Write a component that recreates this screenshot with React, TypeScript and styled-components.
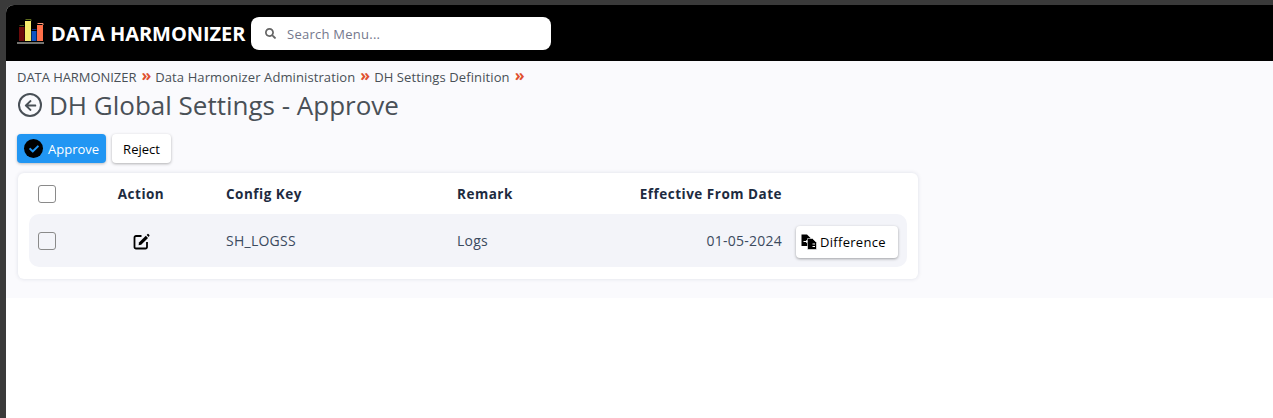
import React from "react"
import styled, { createGlobalStyle } from "styled-components"
import { FaArrowLeft, FaSearch, FaCheck } from "react-icons/fa"

const GlobalStyle = createGlobalStyle`
  html, body {
    margin: 0;
    padding: 0;
    height: 100%;
    background: #3a3a3a;
    font-family: "Open Sans", "Liberation Sans", sans-serif;
  }
  #root {
    height: 100%;
  }
`

const Logo = () => (
  <svg width="30" height="28" viewBox="0 0 30 28">
    <rect x="2" y="8" width="5.5" height="14" fill="#6b0a0a" />
    <path d="M2.5 6.5 H7" stroke="#4d5a1c" strokeWidth="1" />
    <rect x="8" y="2" width="6" height="20" fill="#f6ec6e" />
    <path d="M8.5 0.5 H14 V2" stroke="#5d6a1c" strokeWidth="1" fill="none" />
    <rect x="14.5" y="12" width="5" height="10" fill="#0f55c4" />
    <path d="M15 10.5 H19.5" stroke="#142a78" strokeWidth="1" />
    <rect x="20" y="6" width="6" height="16" fill="#ff7049" />
    <path d="M20.5 4.5 H26 V6" stroke="#ff9a7a" strokeWidth="1" fill="none" />
    <path d="M0.5 24 H27" stroke="#e8e8e0" strokeWidth="2" strokeDasharray="1 1" />
  </svg>
)

const DiffIcon = () => (
  <svg width="16" height="16" viewBox="0 0 16 16">
    <path d="M0.5 0.5 H6 L9.5 4 V12 H0.5 Z" fill="#000" />
    <path d="M6.5 4.5 H11.5 L15.5 8.5 V15.5 H6.5 Z" fill="#000" stroke="#fff" strokeWidth="0.6" />
    <path d="M2.5 7.5 H6 M5 6.3 L6.3 7.5 L5 8.7" stroke="#fff" strokeWidth="1" fill="none" />
    <path d="M11.5 10 H14 M11.5 12.5 H14" stroke="#fff" strokeWidth="1" />
  </svg>
)

const EditGlyph = () => (
  <svg width="17" height="17" viewBox="0 0 17 17">
    <path
      d="M8.5 3 H3 A1.5 1.5 0 0 0 1.5 4.5 V14 A1.5 1.5 0 0 0 3 15.5 H12.5 A1.5 1.5 0 0 0 14 14 V9"
      fill="none"
      stroke="#000"
      strokeWidth="1.8"
    />
    <path d="M6 9.6 L12.8 2.8 L15 5 L8.2 11.8 L5.6 12.3 Z" fill="#000" />
    <path d="M13.6 2 L14.6 1 Q15 0.7 15.4 1 L16.4 2 Q16.7 2.4 16.4 2.8 L15.8 3.9 Z" fill="#000" />
  </svg>
)

const App = () => {
  return (
    <Frame>
      <GlobalStyle />
      <Page>
        <Header>
          <Brand>
            <Logo />
            <BrandName>DATA HARMONIZER</BrandName>
          </Brand>
          <SearchBox>
            <SearchIcon />
            <SearchInput placeholder="Search Menu..." />
          </SearchBox>
        </Header>

        <Content>
          <Breadcrumbs>
            <Crumb $caps>DATA HARMONIZER</Crumb>
            <Sep>»</Sep>
            <Crumb>Data Harmonizer Administration</Crumb>
            <Sep>»</Sep>
            <Crumb>DH Settings Definition</Crumb>
            <Sep>»</Sep>
          </Breadcrumbs>

          <TitleRow>
            <BackButton>
              <FaArrowLeft />
            </BackButton>
            <Title>DH Global Settings - Approve</Title>
          </TitleRow>

          <Actions>
            <PrimaryButton>
              <CheckBadge>
                <FaCheck />
              </CheckBadge>
              Approve
            </PrimaryButton>
            <PlainButton>Reject</PlainButton>
          </Actions>

          <Card>
            <HeadRow>
              <CheckCell>
                <Box />
              </CheckCell>
              <ActionCell>Action</ActionCell>
              <div>Config Key</div>
              <div>Remark</div>
              <DateCell>Effective From Date</DateCell>
              <div />
            </HeadRow>
            <BodyRow>
              <CheckCell>
                <Box />
              </CheckCell>
              <ActionCell>
                <EditGlyph />
              </ActionCell>
              <div>SH_LOGSS</div>
              <div>Logs</div>
              <DateCell>01-05-2024</DateCell>
              <DiffCell>
                <DiffButton>
                  <DiffIcon />
                  Difference
                </DiffButton>
              </DiffCell>
            </BodyRow>
          </Card>
        </Content>
      </Page>
    </Frame>
  )
}

export default App

const Frame = styled.div`
  height: 100%;
  padding: 5px 0 0 6px;
  box-sizing: border-box;
  overflow: hidden;
`

const Page = styled.div`
  height: 100%;
  background: #fff;
  border-top-left-radius: 8px;
  overflow: hidden;
`

const Header = styled.header`
  height: 56px;
  background: #000;
  display: flex;
  align-items: center;
  padding: 0 0 0 11px;
  box-sizing: border-box;
`

const Brand = styled.div`
  display: flex;
  align-items: center;
  gap: 4px;
  width: 234px;
  height: 32px;
`

const BrandName = styled.span`
  color: #fff;
  font-size: 20px;
  font-weight: 700;
  letter-spacing: -0.05px;
  white-space: nowrap;
`

const SearchBox = styled.div`
  width: 300px;
  height: 33px;
  margin-top: 1px;
  background: #fff;
  border-radius: 8px;
  display: flex;
  align-items: center;
  padding-left: 14px;
  box-sizing: border-box;
  gap: 9px;
`

const SearchIcon = styled(FaSearch)`
  width: 11px;
  height: 11px;
  color: #666;
`

const SearchInput = styled.input`
  border: 0;
  outline: 0;
  background: transparent;
  flex: 1;
  font-family: inherit;
  font-size: 13px;
  letter-spacing: 0.25px;
  &::placeholder {
    color: #74788d;
    opacity: 1;
  }
`

const Content = styled.main`
  height: 237px;
  background: #fafafd;
  padding: 7px 0 0 11px;
  box-sizing: border-box;
`

const Breadcrumbs = styled.nav`
  display: flex;
  align-items: center;
  height: 17px;
  font-size: 13px;
  color: #495057;
`

const Crumb = styled.span<{ $caps?: boolean }>`
  white-space: nowrap;
  letter-spacing: ${({ $caps }) => ($caps ? "-0.05px" : "0.1px")};
`

const Sep = styled.span`
  color: #e0512f;
  font-weight: 700;
  font-size: 16px;
  line-height: 17px;
  margin: -2px 4px 0 5px;
`

const TitleRow = styled.div`
  display: flex;
  align-items: center;
  gap: 7px;
  height: 36px;
  margin-top: 2px;
`

const BackButton = styled.span`
  width: 24px;
  height: 24px;
  margin-left: 1px;
  box-sizing: border-box;
  border: 2px solid #495057;
  border-radius: 50%;
  display: flex;
  align-items: center;
  justify-content: center;
  color: #495057;
  font-size: 13px;
`

const Title = styled.h1`
  margin: 0;
  font-size: 26px;
  font-weight: 400;
  color: #495057;
  white-space: nowrap;
`

const Actions = styled.div`
  display: flex;
  gap: 6px;
  margin-top: 11px;
`

const PrimaryButton = styled.button`
  width: 89px;
  height: 29px;
  border: 0;
  border-radius: 4px;
  background: #2196f3;
  color: #fff;
  font-family: inherit;
  font-size: 13px;
  font-weight: 500;
  display: flex;
  align-items: center;
  gap: 5px;
  padding: 0 0 0 7px;
  box-shadow: 0 1px 3px rgba(0, 0, 0, 0.25);
`

const CheckBadge = styled.span`
  width: 19px;
  height: 19px;
  border-radius: 50%;
  background: #000;
  display: flex;
  align-items: center;
  justify-content: center;
  color: #2196f3;
  font-size: 10px;
`

const PlainButton = styled.button`
  width: 59px;
  height: 29px;
  border: 0;
  border-radius: 4px;
  background: #fff;
  color: #000;
  font-family: inherit;
  font-size: 13px;
  font-weight: 500;
  padding: 0;
  box-shadow: 0 1px 3px rgba(0, 0, 0, 0.3);
`

const Card = styled.section`
  width: 900px;
  height: 106px;
  margin: 10px 0 0 1px;
  padding: 0 11px;
  box-sizing: border-box;
  background: #fff;
  border-radius: 6px;
  box-shadow: 0 0 4px rgba(20, 30, 70, 0.12);
`

const HeadRow = styled.div`
  height: 41px;
  display: grid;
  grid-template-columns: 27px 170px 231px 162px 163px 1fr;
  align-items: center;
  font-size: 13.5px;
  font-weight: 700;
  color: #1d2b3f;
  letter-spacing: 0.5px;
`

const BodyRow = styled(HeadRow)`
  height: 53px;
  background: #f3f4f9;
  border-radius: 10px;
  font-weight: 400;
  color: #3b4a5e;
  font-size: 14px;
  letter-spacing: 0.25px;
`

const CheckCell = styled.div`
  display: flex;
  justify-content: flex-end;
`

const Box = styled.span`
  width: 18px;
  height: 18px;
  box-sizing: border-box;
  border: 1.5px solid #8a8a8a;
  border-radius: 3px;
`

const ActionCell = styled.div`
  display: flex;
  justify-content: center;
  padding-top: 1px;
`

const DateCell = styled.div`
  text-align: right;
  white-space: nowrap;
  grid-column: 5;
`

const DiffCell = styled.div`
  display: flex;
  justify-content: flex-end;
  padding: 2px 9px 0 0;
`

const DiffButton = styled.button`
  width: 102px;
  height: 32px;
  border: 0;
  border-radius: 4px;
  background: #fff;
  color: #000;
  font-family: inherit;
  font-size: 13px;
  letter-spacing: 0.3px;
  display: flex;
  align-items: center;
  gap: 3px;
  padding: 0 0 0 5px;
  box-shadow: 0 1px 3px rgba(0, 0, 0, 0.35);
`
